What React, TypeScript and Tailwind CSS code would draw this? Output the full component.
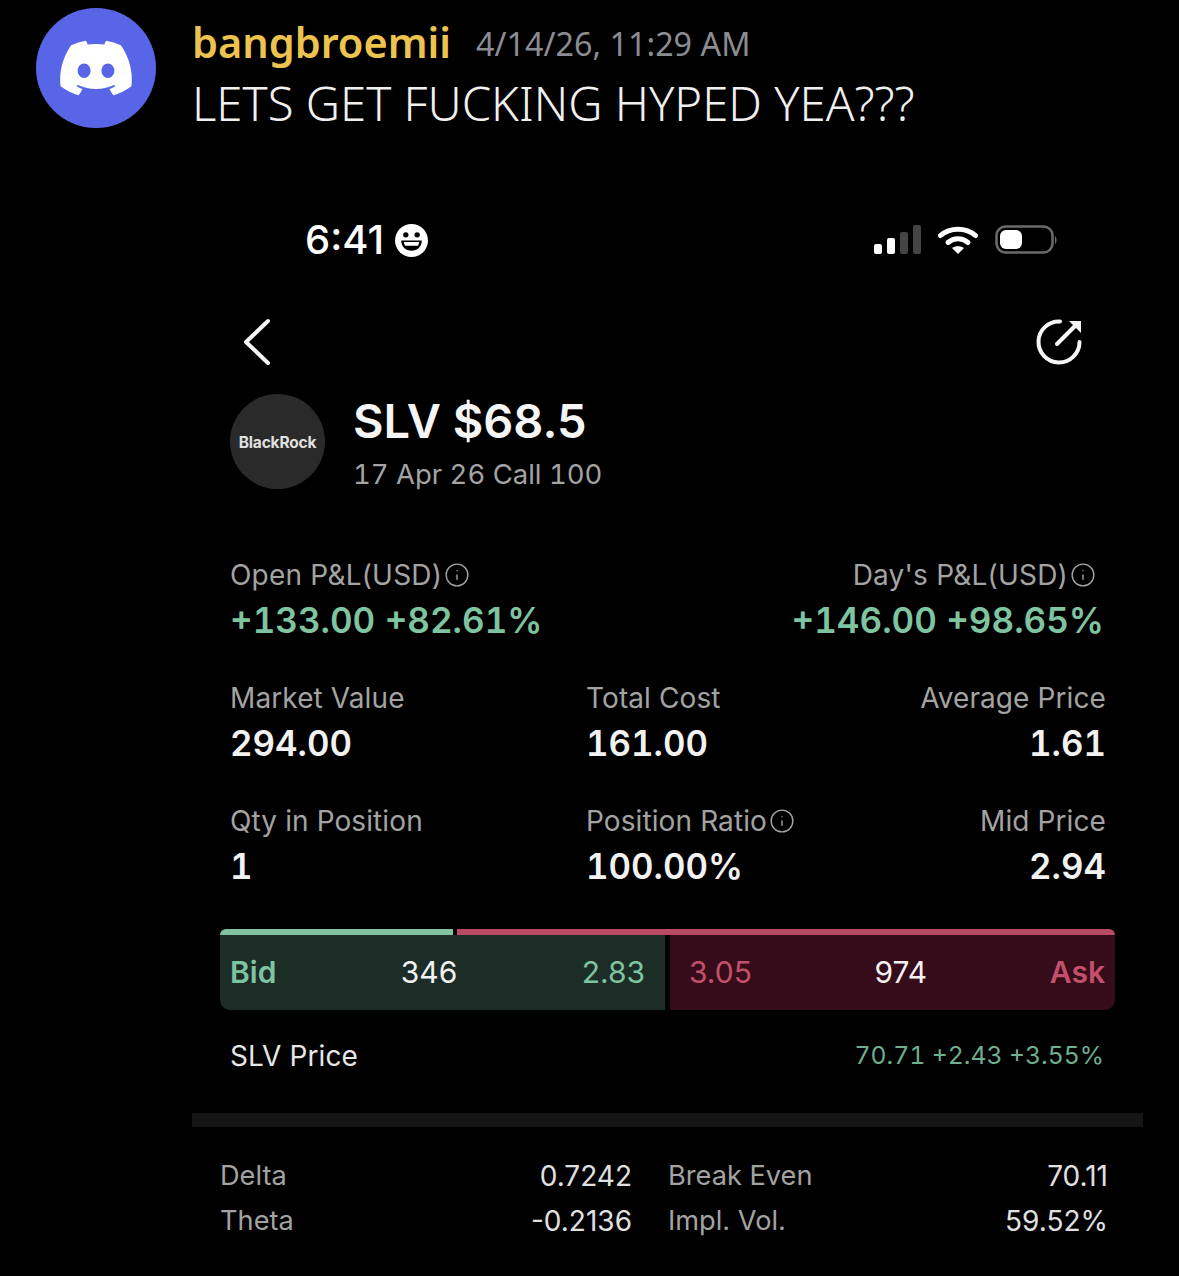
import { FaDiscord } from 'react-icons/fa';
import { Info } from 'lucide-react';

function Stat({ label, value, right, info }: { label: string; value: string; right?: boolean; info?: boolean }) {
  return (
    <div className={right ? 'flex flex-col items-end' : 'flex flex-col'}>
      <div className="flex items-center gap-[2px] text-[28px] leading-[36px] tracking-[0.1px] text-[#a3a3a3]">
        {label}
        {info && <Info size={26} strokeWidth={1.3} />}
      </div>
      <div className="mt-[5px] text-[34.800px] leading-[44px] font-semibold text-[#f2f2f2] tabular-nums">{value}</div>
    </div>
  );
}

export default function App() {
  return (
    <div className="relative h-[1276px] w-[1179px] overflow-hidden bg-black font-['Inter',sans-serif] text-white">
      {/* discord header */}
      <div className="flex pl-[36px] pt-[8px]">
        <div className="flex h-[120px] w-[120px] items-center justify-center rounded-full bg-[#5865e6]">
          <FaDiscord size={78} color="#ffffff" />
        </div>
        <div className="ml-[36px] pt-[6px]">
          <div className="flex items-center">
            <span className="font-['Noto_Sans',sans-serif] text-[41.500px] leading-[56px] font-semibold text-[#edc34f]">bangbroemii</span>
            <span className="mt-[2px] ml-[25px] font-['Noto_Sans',sans-serif] text-[32.300px] leading-[54px] text-[#8b8d93]">4/14/26, 11:29 AM</span>
          </div>
          <div className="mt-[3px] font-['Noto_Sans',sans-serif] text-[47.300px] leading-[60px] font-light text-[#f0f0f0]">LETS GET FUCKING HYPED YEA???</div>
        </div>
      </div>

      {/* phone status bar */}
      <div className="mt-[85px] flex h-[44px] items-center justify-between pr-[120px] pl-[305px]">
        <div className="flex items-center gap-[11px]">
          <span className="text-[40px] leading-[44px] font-medium">6:41</span>
          <svg width="33" height="33" viewBox="0 0 32 32">
            <circle cx="16" cy="16" r="16" fill="#fff" />
            <circle cx="10.500" cy="10.500" r="2.600" fill="#000" />
            <circle cx="21.500" cy="10.500" r="2.600" fill="#000" />
            <path d="M6 16h20c0 6-4.500 10-10 10S6 22 6 16z" fill="#000" />
            <path d="M8.500 17.500h15c-.3 1.500-.7 2.600-1.200 3.500H9.700c-.5-.9-.9-2-1.200-3.500z" fill="#fff" />
          </svg>
        </div>
        <div className="flex items-center gap-[17px]">
          <svg width="47" height="30" viewBox="0 0 47 30">
            <rect x="0" y="19" width="8" height="10" rx="2" fill="#fff" />
            <rect x="13" y="13" width="8" height="16" rx="2" fill="#fff" />
            <rect x="26" y="7" width="8" height="22" rx="2" fill="#444" />
            <rect x="39" y="0" width="8" height="29" rx="2" fill="#444" />
          </svg>
          <svg width="40" height="30" viewBox="0 0 40 30">
            <path d="M2.500 10.500C12 2 28 2 37.500 10.500" fill="none" stroke="#fff" strokeWidth="5" strokeLinecap="round" />
            <path d="M10 17.500c6-5 14-5 20 0" fill="none" stroke="#fff" strokeWidth="5" strokeLinecap="round" />
            <path d="M14 23c3.500-2.500 8.500-2.500 12 0l-6 6z" fill="#fff" />
          </svg>
          <svg width="64" height="30" viewBox="0 0 64 30">
            <rect x="1.500" y="1.500" width="56" height="26" rx="9" fill="none" stroke="#6b6b6b" strokeWidth="2.500" />
            <rect x="5" y="5" width="22" height="19" rx="6" fill="#fff" />
            <path d="M60 11c2 1 2 7 0 8z" fill="#6b6b6b" />
          </svg>
        </div>
      </div>

      {/* nav */}
      <div className="mt-[56px] flex items-center justify-between pr-[95px] pl-[241px]">
        <svg width="32" height="48" viewBox="0 0 32 48" fill="none" stroke="#f5f5f5" strokeWidth="4" strokeLinecap="round" strokeLinejoin="round">
          <path d="M27 3 5 24l22 21" />
        </svg>
        <svg width="48" height="48" viewBox="0 0 48 48" fill="none" stroke="#f5f5f5" strokeWidth="4" strokeLinecap="round">
          <path d="M43.500 24A20.500 20.500 0 1 1 24 3.500" />
          <path d="M21 26 41 6" />
          <path d="M33 3h12v12z" fill="#f5f5f5" stroke="none" />
        </svg>
      </div>

      {/* contract */}
      <div className="mt-[28px] flex items-start pl-[230px]">
        <div className="flex h-[95px] w-[95px] items-center justify-center rounded-full bg-[#2a2a2a] pt-[3px] text-[15.500px] font-bold tracking-[-0.2px] text-[#e0e0e0]">BlackRock</div>
        <div className="ml-[28px]">
          <div className="text-[47px] leading-[54px] font-semibold text-[#f5f5f5]">SLV $68.5</div>
          <div className="mt-[8px] text-[27.500px] leading-[36px] text-[#a3a3a3] tabular-nums">17 Apr 26 Call 100</div>
        </div>
      </div>

      {/* P&L */}
      <div className="mt-[65px] flex justify-between pr-[75px] pl-[230px]">
        <div>
          <div className="flex items-center gap-[2px] text-[28px] leading-[36px] tracking-[0.2px] text-[#a3a3a3]">
            Open P&amp;L(USD)
            <Info size={26} strokeWidth={1.3} />
          </div>
          <div className="mt-[5px] text-[35px] leading-[44px] font-semibold text-[#7fc4a0] tabular-nums">+133.00 +82.61%</div>
        </div>
        <div className="flex flex-col items-end">
          <div className="mr-[8px] flex items-center gap-[2px] text-[28px] leading-[36px] tracking-[0.2px] text-[#a3a3a3]">
            Day's P&amp;L(USD)
            <Info size={26} strokeWidth={1.3} />
          </div>
          <div className="mt-[5px] text-[35px] leading-[44px] font-semibold text-[#7fc4a0] tabular-nums">+146.00 +98.65%</div>
        </div>
      </div>

      {/* stats */}
      <div className="mt-[38px] grid grid-cols-[356px_1fr_auto] gap-y-[38px] pr-[73px] pl-[230px]">
        <Stat label="Market Value" value="294.00" />
        <Stat label="Total Cost" value="161.00" />
        <Stat label="Average Price" value="1.61" right />
        <Stat label="Qty in Position" value="1" />
        <Stat label="Position Ratio" value="100.00%" info />
        <Stat label="Mid Price" value="2.94" right />
      </div>

      {/* bid ask */}
      <div className="mt-[41px] ml-[220px] w-[895px]">
        <div className="flex h-[6px] gap-[4px]">
          <div className="w-[233px] rounded-tl-[6px] bg-[#82c2a0]" />
          <div className="flex-1 rounded-tr-[6px] bg-[#b84a63]" />
        </div>
        <div className="flex h-[75px] gap-[5px] text-[30px]">
          <div className="flex w-[445px] items-center justify-between rounded-bl-[10px] bg-[#1b2d26] pr-[20px] pl-[10px]">
            <span className="font-semibold text-[#7fc4a0]">Bid</span>
            <span className="text-[#f2f2f2]">346</span>
            <span className="text-[#7fc4a0]">2.83</span>
          </div>
          <div className="flex flex-1 items-center justify-between rounded-br-[10px] bg-[#360b1a] pr-[10px] pl-[19px]">
            <span className="text-[#c2506c]">3.05</span>
            <span className="text-[#f2f2f2]">974</span>
            <span className="font-semibold text-[#c2506c]">Ask</span>
          </div>
        </div>
      </div>

      {/* underlying */}
      <div className="mt-[26px] flex items-center justify-between pr-[75px] pl-[230px]">
        <span className="text-[28px] leading-[40px] tracking-[0.1px] text-[#e6e6e6]">SLV Price</span>
        <span className="text-[24.700px] text-[#6fae8e] tabular-nums">70.71 +2.43 +3.55%</span>
      </div>

      <div className="mt-[37px] ml-[192px] h-[14px] w-[951px] bg-[#161616]" />

      {/* greeks */}
      <div className="mt-[31px] grid grid-cols-[412px_476px] gap-y-[9px] pl-[220px] text-[28px] leading-[36px] text-[#e0e0e0]">
        <div className="flex justify-between"><span className="text-[27.200px] text-[#a3a3a3]">Delta</span><span>0.7242</span></div>
        <div className="ml-[36px] flex justify-between"><span className="text-[27.200px] text-[#a3a3a3]">Break Even</span><span>70.11</span></div>
        <div className="flex justify-between"><span className="text-[27.200px] text-[#a3a3a3]">Theta</span><span>-0.2136</span></div>
        <div className="ml-[36px] flex justify-between"><span className="text-[27.200px] text-[#a3a3a3]">Impl. Vol.</span><span>59.52%</span></div>
      </div>
    </div>
  );
}
